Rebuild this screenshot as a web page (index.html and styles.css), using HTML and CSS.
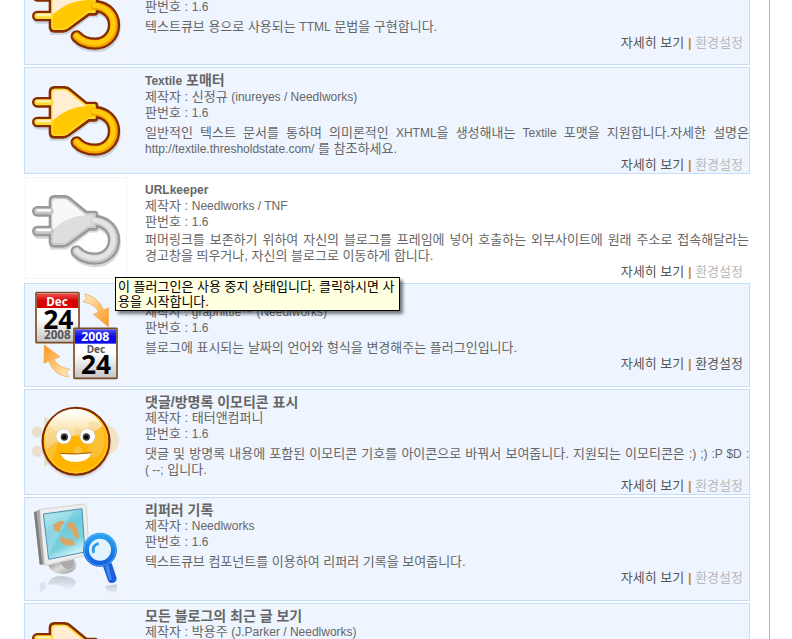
FILE: index.html
```
<!DOCTYPE html>
<html lang="ko">
<head>
  <meta charset="UTF-8" />
  <meta name="viewport" content="width=device-width, initial-scale=1.0"/>
  <title>플러그인 목록</title>
  <link rel="stylesheet" href="styles.css">
</head>
<body>
  <!-- Shared plug icon -->
  <svg class="defs" width="0" height="0" aria-hidden="true">
    <defs>
      <symbol id="plug" viewBox="78 207 300 300">
        <g fill="none" stroke-linecap="round" stroke-linejoin="round">
          <g class="plug-shadow" transform="translate(2 7)">
            <path d="M112 366H155" stroke-width="32"/>
            <path d="M151 261H195Q202 261 208 267L260 310H290V360H265L206 406Q198 412 190 412H151Z" stroke-width="7"/>
            <path d="M288 337C322 340 342 363 342 392C342 426 317 449 285 449C260 449 242 440 230 427" stroke-width="37"/>
          </g>
          <path class="plug-line" d="M112 307H155M112 366H155" stroke-width="32"/>
          <path class="plug-line" d="M286 336C320 339 342 362 342 392C342 426 317 449 285 449C260 449 242 440 230 427" stroke-width="37"/>
          <path class="plug-body plug-line" d="M150 276Q150 262 163 262H193Q202 262 209 268L259 309H284Q291 309 291 316V355Q291 361 285 361H267L207 405Q198 412 188 412H163Q150 412 150 399Z" stroke-width="8"/>
          <path class="plug-rim" d="M156 277Q156 268 165 268H191Q200 268 206 274L257 315H284V354H264L204 400Q197 405 187 405H165Q156 405 156 396Z" stroke-width="4"/>
          <path class="plug-light" d="M157 362V279Q157 270 166 270H191Q198 270 204 275L258 319Q205 320 157 362Z"/>
          <path class="plug-rim" d="M112 307H152M112 366H152" stroke-width="18"/>
          <path class="plug-shine" d="M112 304H150M112 363H150" stroke-width="7"/>
          <path class="plug-edge" d="M284 336C320 339 342 362 342 392C342 426 317 449 285 449C260 449 242 440 230 427" stroke-width="23"/>
          <path class="plug-cable" d="M282 334C318 337 340 362 340 391C340 424 316 447 285 447C260 447 242 438 230 425" stroke-width="15"/>
        </g>
      </symbol>
    </defs>
  </svg>

  <main class="panel">
    <ul class="plugins">

      <li class="plugin">
        <button type="button" class="toggle" aria-label="TTML"><svg class="icon gold"><use href="#plug"/></svg></button>
        <div class="info">
          <h2><span class="en">TTML</span></h2>
          <p>제작자 : <span class="en">Needlworks</span></p>
          <p>판번호 : <span class="en">1.6</span></p>
          <p class="desc">텍스트큐브 용으로 사용되는 <span class="en">TTML</span> 문법을 구현합니다.</p>
          <p class="links"><a href="#">자세히 보기</a> <span class="bar">|</span> <span class="off">환경설정</span></p>
        </div>
      </li>

      <li class="plugin">
        <button type="button" class="toggle" aria-label="Textile 포매터"><svg class="icon gold"><use href="#plug"/></svg></button>
        <div class="info">
          <h2><span class="en">Textile</span> 포매터</h2>
          <p>제작자 : 신정규 <span class="en">(inureyes / Needlworks)</span></p>
          <p>판번호 : <span class="en">1.6</span></p>
          <p class="desc">일반적인 텍스트 문서를 통하며 의미론적인 <span class="en">XHTML</span>을 생성해내는 <span class="en">Textile</span> 포맷을 지원합니다.자세한 설명은 <span class="en">http://textile.thresholdstate.com/</span> 를 참조하세요.</p>
          <p class="links"><a href="#">자세히 보기</a> <span class="bar">|</span> <span class="off">환경설정</span></p>
        </div>
      </li>

      <li class="plugin inactive">
        <button type="button" class="toggle" aria-label="URLkeeper" aria-describedby="tip"><svg class="icon gray"><use href="#plug"/></svg></button>
        <div class="info">
          <h2><span class="en">URLkeeper</span></h2>
          <p>제작자 : <span class="en">Needlworks / TNF</span></p>
          <p>판번호 : <span class="en">1.6</span></p>
          <p class="desc">퍼머링크를 보존하기 위하여 자신의 블로그를 프레임에 넣어 호출하는 외부사이트에 원래 주소로 접속해달라는 경고창을 띄우거나, 자신의 블로그로 이동하게 합니다.</p>
          <p class="links"><a href="#">자세히 보기</a> <span class="bar">|</span> <span class="off">환경설정</span></p>
        </div>
        <div class="tooltip" id="tip" role="tooltip">이 플러그인은 사용 중지 상태입니다. 클릭하시면 사용을 시작합니다.</div>
      </li>

      <li class="plugin">
        <button type="button" class="toggle" aria-label="날짜 형식">
          <svg class="icon" viewBox="78 12 300 300">
            <defs>
              <linearGradient id="paper" x1="0" y1="0" x2="0" y2="1">
                <stop offset="0.5" stop-color="#fff"/>
                <stop offset="1" stop-color="#c4c4c4"/>
              </linearGradient>
              <linearGradient id="red" x1="0" y1="0" x2="0" y2="1">
                <stop offset="0" stop-color="#f05050"/>
                <stop offset="0.5" stop-color="#d80000"/>
              </linearGradient>
              <linearGradient id="blue" x1="0" y1="0" x2="0" y2="1">
                <stop offset="0" stop-color="#5050f4"/>
                <stop offset="0.5" stop-color="#0c0ce8"/>
              </linearGradient>
              <linearGradient id="arrowDown" x1="0" y1="0" x2="1" y2="1">
                <stop offset="0" stop-color="#fff0cc"/>
                <stop offset="1" stop-color="#ff9414"/>
              </linearGradient>
              <linearGradient id="arrowUp" x1="1" y1="1" x2="0" y2="0">
                <stop offset="0" stop-color="#fff0cc"/>
                <stop offset="1" stop-color="#ff9414"/>
              </linearGradient>
            </defs>
            <rect x="108" y="35" width="129" height="150" rx="2" fill="url(#paper)" stroke="#7c4c22" stroke-width="5"/>
            <rect x="111" y="38" width="123" height="43" fill="url(#red)"/>
            <g class="cal" text-anchor="middle">
              <text x="171" y="75" font-size="35" fill="#fff">Dec</text>
              <text x="175" y="145" font-size="79" fill="#000">24</text>
              <text x="172" y="174" font-size="35" fill="#555">2008</text>
            </g>
            <rect x="222" y="142" width="129" height="150" rx="2" fill="url(#paper)" stroke="#7c4c22" stroke-width="5"/>
            <rect x="225" y="145" width="123" height="43" fill="url(#blue)"/>
            <g class="cal" text-anchor="middle">
              <text x="286" y="179" font-size="37" fill="#fff">2008</text>
              <text x="288" y="216" font-size="30" fill="#555">Dec</text>
              <text x="288" y="278" font-size="79" fill="#000">24</text>
            </g>
            <path d="M255 39C279 45 302 61 310 87L326 80L325 137L280 100L296 94C289 76 272 67 249 62L261 54Z" fill="url(#arrowDown)" stroke="#e8a64a" stroke-width="2"/>
            <path d="M206 288C176 284 155 267 147 240L132 247L133 192L180 227L162 234C170 251 186 261 209 264L199 274Z" fill="url(#arrowUp)" stroke="#e8a64a" stroke-width="2"/>
          </svg>
        </button>
        <div class="info">
          <h2>날짜 형식 변경</h2>
          <p>제작자 : <span class="en">graphittie™ (Needlworks)</span></p>
          <p>판번호 : <span class="en">1.6</span></p>
          <p class="desc">블로그에 표시되는 날짜의 언어와 형식을 변경해주는 플러그인입니다.</p>
          <p class="links"><a href="#">자세히 보기</a> <span class="bar">|</span> <a href="#">환경설정</a></p>
        </div>
      </li>

      <li class="plugin">
        <button type="button" class="toggle" aria-label="댓글/방명록 이모티콘 표시">
          <svg class="icon" viewBox="78 15 300 300">
            <defs>
              <linearGradient id="gloss" x1="0" y1="0" x2="0" y2="1">
                <stop offset="0.1" stop-color="#fffdf6"/>
                <stop offset="1" stop-color="#f9c75c"/>
              </linearGradient>
              <radialGradient id="shade">
                <stop offset="0.85" stop-color="#6a6a6a" stop-opacity="0.5"/>
                <stop offset="1" stop-color="#888" stop-opacity="0"/>
              </radialGradient>
            </defs>
            <g fill="#e9dcc4" opacity="0.8">
              <circle cx="112" cy="138" r="17"/>
              <circle cx="112" cy="196" r="17"/>
              <path d="M132 92Q174 108 178 165Q174 225 132 242Z"/>
              <path d="M300 105Q355 120 357 166Q355 205 300 218Z" fill="#f1e2b8"/>
            </g>
            <circle cx="229" cy="172" r="108" fill="url(#shade)"/>
            <circle cx="228" cy="166" r="100" fill="#ffb400" stroke="#852c00" stroke-width="7"/>
            <circle cx="228" cy="166" r="94" fill="none" stroke="#ffc822" stroke-width="5"/>
            <path d="M140 192A91 91 0 0 1 307 120Q290 140 240 145Q174 156 140 192Z" fill="url(#gloss)"/>
            <path d="M145 120Q174 130 172 169Q170 205 152 222Q136 196 137 160Q138 136 145 120ZM265 106H286Q312 115 314 160Q312 207 286 215H265Z" fill="#f4cf7e" opacity="0.4"/>
            <circle cx="234" cy="139" r="13" fill="#f4cf7e" opacity="0.5"/>
            <circle cx="234" cy="195" r="13" fill="#f4cf7e" opacity="0.5"/>
            <g stroke="#c9c0ae" stroke-width="2" fill="#fff">
              <circle cx="191" cy="151" r="23"/>
              <circle cx="263" cy="151" r="23"/>
            </g>
            <circle cx="193" cy="153" r="11" fill="#45403c"/>
            <circle cx="259" cy="153" r="11" fill="#45403c"/>
            <circle cx="193" cy="154" r="6" fill="#000"/>
            <circle cx="259" cy="154" r="6" fill="#000"/>
            <path d="M181 203Q227 207 274 201Q266 227 227 228Q190 227 181 203Z" fill="#fff"/>
            <path d="M180 202Q227 207 275 200" fill="none" stroke="#a35c10" stroke-width="3"/>
          </svg>
        </button>
        <div class="info">
          <h2>댓글/방명록 이모티콘 표시</h2>
          <p>제작자 : 태터앤컴퍼니</p>
          <p>판번호 : <span class="en">1.6</span></p>
          <p class="desc">댓글 및 방명록 내용에 포함된 이모티콘 기호를 아이콘으로 바꿔서 보여줍니다. 지원되는 이모티콘은 <span class="en">:) ;) :P $D :<wbr>(&nbsp;--;</span> 입니다.</p>
          <p class="links"><a href="#">자세히 보기</a> <span class="bar">|</span> <span class="off">환경설정</span></p>
        </div>
      </li>

      <li class="plugin">
        <button type="button" class="toggle" aria-label="리퍼러 기록">
          <svg class="icon" viewBox="78 12 300 300">
            <defs>
              <linearGradient id="screen" x1="0" y1="0" x2="0.4" y2="1">
                <stop offset="0" stop-color="#b4e9ee"/>
                <stop offset="0.45" stop-color="#6fcbdc"/>
                <stop offset="0.8" stop-color="#79d0df"/>
                <stop offset="1" stop-color="#c8f0f4"/>
              </linearGradient>
              <linearGradient id="stand" x1="0" y1="0" x2="1" y2="1">
                <stop offset="0" stop-color="#777"/>
                <stop offset="0.5" stop-color="#ddd"/>
                <stop offset="1" stop-color="#999"/>
              </linearGradient>
              <linearGradient id="reflect" x1="0" y1="0" x2="0" y2="1">
                <stop offset="0" stop-color="#c2c8d0"/>
                <stop offset="1" stop-color="#eef5ff"/>
              </linearGradient>
              <linearGradient id="ring" x1="0" y1="0" x2="0" y2="1">
                <stop offset="0" stop-color="#2ba0f2"/>
                <stop offset="1" stop-color="#1560e0"/>
              </linearGradient>
            </defs>
            <path d="M144 268Q149 243 185 243Q222 246 228 261Q221 282 204 288Q192 268 144 268Z" fill="url(#reflect)"/>
            <path d="M119 265L137 262V281L120 291Z" fill="#dde3ec"/>
            <path d="M315 273L350 268L352 296H326Z" fill="url(#reflect)"/>
            <path d="M145 211Q152 236 190 237Q228 234 229 207L224 192Z" fill="url(#stand)"/>
            <path d="M180 202L222 193Q225 218 207 222Q189 222 180 202Z" fill="#aaa"/>
            <path d="M102 52L120 43L139 210L119 208Z" fill="#a9a9a9"/>
            <path d="M102 52L109 49L127 210L119 208Z" fill="#7c7c7c"/>
            <path d="M119 43L252 27Q258 27 259 34L267 178L139 211Q134 211 133 205Z" fill="#eeeeee" stroke="#c6c6c6" stroke-width="2"/>
            <path d="M130 57L246 41L255 171L146 193Z" fill="url(#screen)" stroke="#538fb0" stroke-width="3"/>
            <path d="M134 61L220 49Q180 110 145 182Z" fill="#fff" opacity="0.2"/>
            <g fill="#d9a765">
              <path d="M162 105L159 89L169 83Q175 76 188 77L194 84L184 91L179 113Z"/>
              <path d="M205 83L221 82Q235 100 237 127L228 132L222 122L213 104L203 98Z"/>
              <path d="M179 127L190 126L209 136L216 130L226 149L201 153L183 143Z"/>
            </g>
            <path d="M308 211L335 204L350 250Q350 264 333 264Q325 263 323 254Z" fill="#1c5ddd"/>
            <path d="M315 211L325 208L336 254L327 255Z" fill="#3c8af2"/>
            <circle cx="300" cy="164" r="42" fill="#e2f3fc" stroke="url(#ring)" stroke-width="18"/>
            <circle cx="300" cy="164" r="48" fill="none" stroke="#5fc0f8" stroke-width="2"/>
            <path d="M281 174Q274 151 296 145" fill="none" stroke="#2d9bed" stroke-width="9"/>
          </svg>
        </button>
        <div class="info">
          <h2>리퍼러 기록</h2>
          <p>제작자 : <span class="en">Needlworks</span></p>
          <p>판번호 : <span class="en">1.6</span></p>
          <p class="desc">텍스트큐브 컴포넌트를 이용하여 리퍼러 기록을 보여줍니다.</p>
          <p class="links"><a href="#">자세히 보기</a> <span class="bar">|</span> <span class="off">환경설정</span></p>
        </div>
      </li>

      <li class="plugin">
        <button type="button" class="toggle" aria-label="모든 블로그의 최근 글 보기"><svg class="icon gold"><use href="#plug"/></svg></button>
        <div class="info">
          <h2>모든 블로그의 최근 글 보기</h2>
          <p>제작자 : 박용주 <span class="en">(J.Parker / Needlworks)</span></p>
        </div>
      </li>

    </ul>
  </main>
</body>
</html>
```

FILE: styles.css
```
body {
  margin: 0;
  height: 100vh;
  overflow: hidden;
  background-color: #ffffff;
  font-family: "Liberation Sans", "Noto Sans CJK KR", sans-serif;
  font-size: 13px;
  line-height: 16px;
  color: #666666;
}

.defs {
  display: block;
}

.panel {
  display: flow-root;
  height: 100vh;
  margin-right: 22px;
  padding: 0 19px 0 24px;
  border-right: 1px solid #b4b4b4;
  box-sizing: border-box;
  overflow: hidden;
}

/* list is scrolled part of the way into its first item */
.plugins {
  display: flex;
  flex-direction: column;
  gap: 2px;
  margin: -39px 0 0;
  padding: 0;
  list-style: none;
}

.plugin {
  position: relative;
  display: flex;
  gap: 18px;
  border: 1px solid #c3ddfb;
  background-color: #eef5ff;
}

.plugin.inactive {
  border-color: #ffffff;
  background-color: #ffffff;
}

.toggle {
  flex: none;
  align-self: flex-start;
  width: 102px;
  height: 102px;
  padding: 0;
  border: 1px solid #f2f4f8;
  background: none;
  cursor: pointer;
}

.icon {
  display: block;
  width: 100px;
  height: 100px;
}

.info {
  flex: 1;
  min-width: 0;
  padding-top: 4px;
}

.info h2,
.info p {
  margin: 0;
}

.info h2 {
  font-size: 14px;
  line-height: 16px;
}

.en {
  font-size: 12px;
}

.info .desc {
  margin-top: 4px;
  text-align: justify;
}

.inactive .info .desc {
  margin-top: 2px;
}

.info .links {
  padding-right: 6px;
  text-align: right;
}

.links a {
  color: #555555;
  text-decoration: none;
}

.links a:hover {
  text-decoration: underline;
}

.links .bar {
  color: #d08a30;
  font-weight: bold;
}

.links .off {
  color: #b8b8b8;
}

.tooltip {
  position: absolute;
  z-index: 10;
  top: 100px;
  left: 90px;
  width: 281px;
  padding: 1px 0 1px 2px;
  border: 1px solid #000000;
  background-color: #ffffe1;
  box-shadow: 3px 3px 3px rgba(0, 0, 0, 0.5);
  line-height: 15px;
  color: #000000;
}

.cal {
  font-family: "Noto Sans", sans-serif;
  font-weight: bold;
}

/* plug colours */
.gold {
  --line: #852c00;
  --body: #ffc800;
  --rim: #ffdc30;
  --light: #ffeed2;
  --shine: #fff0b8;
  --edge: #f5a000;
  --cable: #ffcb0c;
}

.gray {
  --line: #999999;
  --body: #dedede;
  --rim: #c6c6c6;
  --light: #f8f8f8;
  --shine: #ffffff;
  --edge: #c8c8c8;
  --cable: #e4e4e4;
}

.plug-shadow {
  stroke: #8a94a0;
  opacity: 0.35;
}

.plug-line {
  stroke: var(--line);
}

.plug-body {
  fill: var(--body);
}

.plug-rim {
  stroke: var(--rim);
}

.plug-light {
  fill: var(--light);
}

.plug-shine {
  stroke: var(--shine);
}

.plug-edge {
  stroke: var(--edge);
}

.plug-cable {
  stroke: var(--cable);
}
```
